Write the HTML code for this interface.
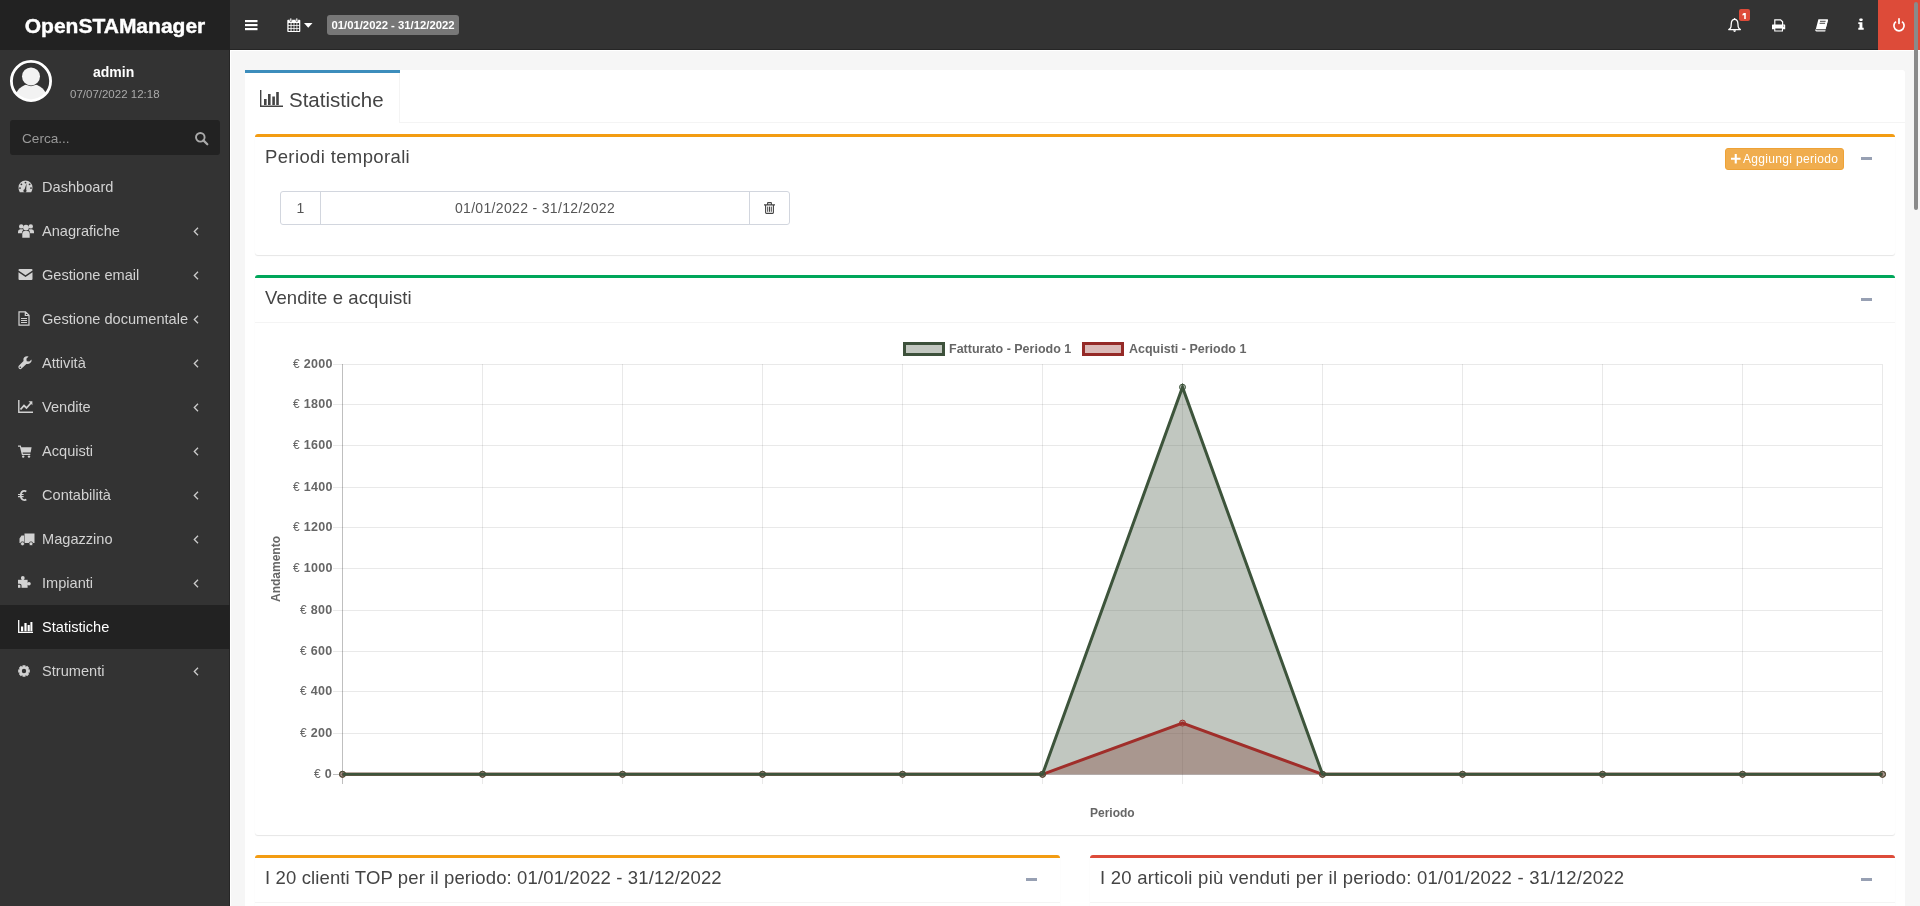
<!DOCTYPE html>
<html><head><meta charset="utf-8">
<style>
*{box-sizing:border-box;margin:0;padding:0}
html,body{width:1920px;height:906px;overflow:hidden;background:#f4f4f4;font-family:"Liberation Sans",sans-serif;color:#333}
.abs{position:absolute;will-change:transform}
svg{position:absolute;overflow:visible}
#logo{left:0;top:0;width:230px;height:50px;background:#222;color:#fff;font-weight:bold;font-size:21px;line-height:51px;text-align:center;-webkit-text-stroke:0.4px #fff}
#nav{left:230px;top:0;width:1690px;height:50px;background:#333;border-bottom:1px solid #262626}
#side{left:0;top:50px;width:230px;height:856px;background:#333;border-right:1px solid #262626}
.mi{position:absolute;left:0;width:230px;height:44px;color:#d2d2d2;font-size:14.6px;line-height:44px}
.mi span{position:absolute;left:42px;top:0;will-change:transform}
.mi.act{background:#222;color:#fff}
#content{left:230px;top:50px;width:1690px;height:856px;background:#f6f6f6;border-left:1px solid #fff;border-top:1px solid #fff}
.box{position:absolute;background:#fff;border-radius:3px;box-shadow:0 1px 1px rgba(0,0,0,0.1)}
.bt{position:absolute;left:10px;font-size:18.5px;color:#444;white-space:nowrap;will-change:transform}
.minus{position:absolute;width:11px;height:3px;background:#97a0b3}
.lbl{position:absolute;will-change:transform;font-size:12px;font-weight:bold;color:#666;white-space:nowrap}
.yl{position:absolute;will-change:transform;right:1587.7px;font-size:12.5px;font-weight:bold;color:#666;white-space:nowrap;line-height:14px;letter-spacing:0.3px}
.yl i{font-style:normal;font-weight:normal;font-size:12px}
</style></head><body>
<div id="logo" class="abs">OpenSTAManager</div>
<div id="nav" class="abs"></div>
<!-- hamburger -->
<svg style="left:245px;top:19px" width="13" height="12" viewBox="0 0 13 12"><rect x="0" y="1" width="12.5" height="2.2" fill="#fff"/><rect x="0" y="5" width="12.5" height="2.2" fill="#fff"/><rect x="0" y="9" width="12.5" height="2.2" fill="#fff"/></svg>
<!-- calendar -->
<svg style="left:287px;top:18px" width="14" height="15" viewBox="0 0 14 15"><path fill="#fff" fill-rule="evenodd" d="M0.3 2.6Q0.3 1.8 1.1 1.8H12.5Q13.3 1.8 13.3 2.6V13.3Q13.3 14.1 12.5 14.1H1.1Q0.3 14.1 0.3 13.3Z M1.6 5.1V7.3H3.6V5.1Z M4.5 5.1V7.3H6.6V5.1Z M7.4 5.1V7.3H9.5V5.1Z M10.3 5.1V7.3H12.1V5.1Z M1.6 8.1V10.2H3.6V8.1Z M4.5 8.1V10.2H6.6V8.1Z M7.4 8.1V10.2H9.5V8.1Z M10.3 8.1V10.2H12.1V8.1Z M1.6 11V13H3.6V11Z M4.5 11V13H6.6V11Z M7.4 11V13H9.5V11Z M10.3 11V13H12.1V11Z"/><rect x="2.9" y="0" width="1.8" height="3.6" rx="0.9" fill="#fff" stroke="#353535" stroke-width="0.6"/><rect x="8.9" y="0" width="1.8" height="3.6" rx="0.9" fill="#fff" stroke="#353535" stroke-width="0.6"/></svg>
<svg style="left:303.5px;top:23px" width="9" height="5" viewBox="0 0 9 5"><path d="M0 0H8.5L4.25 4.8Z" fill="#fff"/></svg>
<div class="abs" style="left:327px;top:15px;width:132px;height:20px;background:#777;border-radius:3px;color:#fff;font-weight:bold;font-size:11.3px;line-height:20px;text-align:center">01/01/2022 - 31/12/2022</div>
<!-- bell -->
<svg style="left:1728px;top:18px" width="14" height="15" viewBox="0 0 14 15"><path fill="none" stroke="#fff" stroke-width="1.3" stroke-linejoin="round" d="M6.6 1.3C4.6 1.3 3.4 3 3.3 5.5L3 8.8Q2.6 10.3 0.8 11.6H12.4Q10.6 10.3 10.2 8.8L9.9 5.5C9.8 3 8.6 1.3 6.6 1.3Z"/><path d="M5.2 12.2Q5.4 14 6.6 14Q7.8 14 8 12.2Z" fill="#fff"/><circle cx="6.6" cy="0.8" r="0.8" fill="#fff"/></svg>
<div class="abs" style="left:1739px;top:9px;width:11px;height:12px;background:#dd4b39;border-radius:2px"></div><svg style="left:1742px;top:13px" width="5" height="7" viewBox="0 0 5 7"><path fill="#fff" d="M1.9 0H3.8V6H2.2V1.9L0.5 2.4V1.1Z"/></svg>
<!-- print -->
<svg style="left:1772px;top:18.5px" width="14" height="13" viewBox="0 0 14 13"><path fill="none" stroke="#fff" stroke-width="1.2" d="M2.8 6V0.8H8.6L10.6 2.8V6"/><path fill="#fff" fill-rule="evenodd" d="M0 6.2Q0 5.6 0.6 5.6H12.6Q13.2 5.6 13.2 6.2V10.2H11V12.6H2.2V10.2H0Z M3.3 9.6V11.5H9.9V9.6Z"/><circle cx="11.6" cy="7" r="0.5" fill="#353535"/></svg>
<!-- book -->
<svg style="left:1815px;top:18.5px" width="14" height="13" viewBox="0 0 14 13"><path fill="#fff" d="M3.4 0.3H12.3Q13.3 0.3 13 1.4L10.6 10.2H1.6Q0.8 10.2 1 9.4Z M0.2 10.4Q0 12.4 1.6 12.4H10.2L10.6 11.2H1.8Q1 11.2 1.3 10.4Z"/><path d="M11.9 2.2L10 9.6" stroke="#fff" stroke-width="1.3"/><path d="M5 2.3H10.6M4.6 4.3H10.1" stroke="#353535" stroke-width="0.9"/></svg>
<!-- info -->
<svg style="left:1857.5px;top:18px" width="6" height="12" viewBox="0 0 6 12"><rect x="1.4" y="0.4" width="3.2" height="2.6" rx="0.8" fill="#fff"/><path fill="#fff" d="M0.3 4.2H4.4V9.8H5.7V11.8H0.3V9.8H1.5V6H0.3Z"/></svg>
<!-- power -->
<div class="abs" style="left:1878px;top:0;width:42px;height:50px;background:#dd4b39"></div>
<svg style="left:1893px;top:18px" width="12" height="13" viewBox="0 0 12 13"><path fill="none" stroke="#fff" stroke-width="1.7" d="M3 3.6A5.1 5.1 0 1 0 9 3.6"/><rect x="5.15" y="0" width="1.7" height="6.2" rx="0.85" fill="#fff"/></svg>

<div id="side" class="abs"></div>
<!-- user panel -->
<svg style="left:10px;top:60px" width="42" height="42" viewBox="0 0 42 42"><defs><clipPath id="avc"><circle cx="21" cy="21" r="19"/></clipPath></defs><g clip-path="url(#avc)"><ellipse cx="21" cy="38.5" rx="16" ry="14.5" fill="#f2f2f2"/><circle cx="21" cy="16.4" r="9.8" fill="#333"/><circle cx="21" cy="16.4" r="9" fill="#f2f2f2"/></g><circle cx="21" cy="21" r="19.6" fill="none" stroke="#fff" stroke-width="2.8"/></svg>
<div class="abs" style="left:93px;top:64px;font-size:14px;font-weight:bold;color:#fff;line-height:16px">admin</div>
<div class="abs" style="left:70px;top:88px;font-size:11.5px;color:#aaa;line-height:13px">07/07/2022 12:18</div>
<div class="abs" style="left:10px;top:120px;width:210px;height:35px;background:#222;border-radius:3px"></div>
<div class="abs" style="left:22px;top:130px;font-size:13.6px;color:#999;line-height:17px">Cerca...</div>
<svg style="left:195px;top:132px" width="14" height="13" viewBox="0 0 14 13"><circle cx="5.3" cy="5.3" r="4.3" fill="none" stroke="#aaa" stroke-width="1.9"/><path d="M8.4 8.4L12.3 12.3" stroke="#aaa" stroke-width="2.2" stroke-linecap="round"/></svg>
<!-- menu -->
<div class="mi" style="top:165px"><span>Dashboard</span></div>
<div class="mi" style="top:209px"><span>Anagrafiche</span></div>
<div class="mi" style="top:253px"><span>Gestione email</span></div>
<div class="mi" style="top:297px"><span>Gestione documentale</span></div>
<div class="mi" style="top:341px"><span>Attività</span></div>
<div class="mi" style="top:385px"><span>Vendite</span></div>
<div class="mi" style="top:429px"><span>Acquisti</span></div>
<div class="mi" style="top:473px"><span>Contabilità</span></div>
<div class="mi" style="top:517px"><span>Magazzino</span></div>
<div class="mi" style="top:561px"><span>Impianti</span></div>
<div class="mi act" style="top:605px"><span>Statistiche</span></div>
<div class="mi" style="top:649px"><span>Strumenti</span></div>
<!-- chevrons -->
<svg style="left:193px;top:227px" width="6" height="9" viewBox="0 0 6 9"><path d="M5 0.8L1.3 4.5L5 8.2" fill="none" stroke="#ccc" stroke-width="1.3"/></svg>
<svg style="left:193px;top:271px" width="6" height="9" viewBox="0 0 6 9"><path d="M5 0.8L1.3 4.5L5 8.2" fill="none" stroke="#ccc" stroke-width="1.3"/></svg>
<svg style="left:193px;top:315px" width="6" height="9" viewBox="0 0 6 9"><path d="M5 0.8L1.3 4.5L5 8.2" fill="none" stroke="#ccc" stroke-width="1.3"/></svg>
<svg style="left:193px;top:359px" width="6" height="9" viewBox="0 0 6 9"><path d="M5 0.8L1.3 4.5L5 8.2" fill="none" stroke="#ccc" stroke-width="1.3"/></svg>
<svg style="left:193px;top:403px" width="6" height="9" viewBox="0 0 6 9"><path d="M5 0.8L1.3 4.5L5 8.2" fill="none" stroke="#ccc" stroke-width="1.3"/></svg>
<svg style="left:193px;top:447px" width="6" height="9" viewBox="0 0 6 9"><path d="M5 0.8L1.3 4.5L5 8.2" fill="none" stroke="#ccc" stroke-width="1.3"/></svg>
<svg style="left:193px;top:491px" width="6" height="9" viewBox="0 0 6 9"><path d="M5 0.8L1.3 4.5L5 8.2" fill="none" stroke="#ccc" stroke-width="1.3"/></svg>
<svg style="left:193px;top:535px" width="6" height="9" viewBox="0 0 6 9"><path d="M5 0.8L1.3 4.5L5 8.2" fill="none" stroke="#ccc" stroke-width="1.3"/></svg>
<svg style="left:193px;top:579px" width="6" height="9" viewBox="0 0 6 9"><path d="M5 0.8L1.3 4.5L5 8.2" fill="none" stroke="#ccc" stroke-width="1.3"/></svg>
<svg style="left:193px;top:667px" width="6" height="9" viewBox="0 0 6 9"><path d="M5 0.8L1.3 4.5L5 8.2" fill="none" stroke="#ccc" stroke-width="1.3"/></svg>
<!-- menu icons -->
<svg style="left:18px;top:180px" width="15" height="13" viewBox="0 0 15 13"><path fill="#d2d2d2" fill-rule="evenodd" d="M7.5 0.5A7 7 0 0 0 0.5 7.5Q0.5 10 1.8 12.2H13.2Q14.5 10 14.5 7.5A7 7 0 0 0 7.5 0.5Z M7.5 1.7A0.9 0.9 0 1 0 7.5 3.5A0.9 0.9 0 1 0 7.5 1.7Z M3.4 3.4A0.9 0.9 0 1 0 3.4 5.2A0.9 0.9 0 1 0 3.4 3.4Z M11.6 3.4A0.9 0.9 0 1 0 11.6 5.2A0.9 0.9 0 1 0 11.6 3.4Z M2 7.2A0.9 0.9 0 1 0 2 9A0.9 0.9 0 1 0 2 7.2Z M13 7.2A0.9 0.9 0 1 0 13 9A0.9 0.9 0 1 0 13 7.2Z M8.6 3.2L6.6 9.2A1.6 1.6 0 1 0 8.2 9.7Z"/></svg>
<svg style="left:17.5px;top:223.5px" width="16" height="14" viewBox="0 0 16 14"><g fill="#d2d2d2"><circle cx="3.2" cy="2.4" r="2.2"/><circle cx="12.8" cy="2.4" r="2.2"/><circle cx="8" cy="3.6" r="2.9"/><path d="M0 7.8Q0 5.3 2.2 5.3H4.4Q5 5.3 5.4 5.8Q4 6.9 3.8 9.2H0Z"/><path d="M16 7.8Q16 5.3 13.8 5.3H11.6Q11 5.3 10.6 5.8Q12 6.9 12.2 9.2H16Z"/><path d="M4.3 13.8V10.2Q4.3 7.1 6.7 7.1H9.3Q11.7 7.1 11.7 10.2V13.8Z"/></g></svg>
<svg style="left:18px;top:269px" width="15" height="11" viewBox="0 0 15 11"><g fill="#d2d2d2"><path d="M0.5 1Q0.5 0 1.5 0H13.5Q14.5 0 14.5 1V1.6L7.5 6.2L0.5 1.6Z"/><path d="M0.5 3.3L7.5 7.9L14.5 3.3V10Q14.5 11 13.5 11H1.5Q0.5 11 0.5 10Z"/></g></svg>
<svg style="left:18px;top:311px" width="12" height="15" viewBox="0 0 12 15"><path fill="none" stroke="#d2d2d2" stroke-width="1.2" d="M1 0.8H7.5L11 4.3V14.2H1Z M7.3 0.8V4.5H11"/><g fill="#d2d2d2"><rect x="3" y="7" width="6" height="1"/><rect x="3" y="9" width="6" height="1"/><rect x="3" y="11" width="6" height="1"/></g></svg>
<svg style="left:18px;top:356px" width="14" height="14" viewBox="0 0 14 14"><path fill="#d2d2d2" d="M13.6 3.4L11.3 5.5L8.7 5.2L8.4 2.7L10.6 0.4Q8 -0.4 6.3 1.3Q4.9 2.7 5.5 4.9L0.8 9.8Q-0.3 11 0.9 12.6Q2.3 13.8 3.6 12.6L8.4 7.9Q10.6 8.6 12.2 7.1Q14 5.4 13.6 3.4Z"/><circle cx="2.3" cy="11.3" r="0.8" fill="#353535"/></svg>
<svg style="left:18px;top:400px" width="15" height="13" viewBox="0 0 15 13"><path fill="none" stroke="#d2d2d2" stroke-width="1.4" d="M0.8 0V12.2H15"/><path fill="none" stroke="#d2d2d2" stroke-width="1.8" d="M2.5 9.5L6 5.5L8.5 8L13 3"/><path fill="#d2d2d2" d="M10.5 1.3H14.4V5.2Z"/></svg>
<svg style="left:18px;top:445px" width="14" height="13" viewBox="0 0 14 13"><path fill="#d2d2d2" d="M0 0.5H2.8L3.3 2.3H13.6L12.6 7.6H4.6L4.9 8.8H12.3V10H3.9L1.9 1.7H0Z"/><circle cx="5.2" cy="11.6" r="1.2" fill="#d2d2d2"/><circle cx="11" cy="11.6" r="1.2" fill="#d2d2d2"/></svg>
<svg style="left:18px;top:489.5px" width="9" height="11" viewBox="0 0 9 11"><path fill="none" stroke="#d2d2d2" stroke-width="1.8" d="M8.3 1.4Q7.5 0.9 6.5 0.9Q3 0.9 2.7 5.5Q3 10.1 6.5 10.1Q7.5 10.1 8.3 9.6"/><path fill="#d2d2d2" d="M0 3.9H5.6V5.1H0Z M0 6H5.6V7.2H0Z"/></svg>
<svg style="left:18.5px;top:533px" width="16" height="13" viewBox="0 0 16 13"><path fill="#d2d2d2" d="M5.5 0.5H15.5V10H5.5Z M0.5 5.5L2.5 2.5H5V10H0.5Z"/><circle cx="3.5" cy="10.8" r="2" fill="#d2d2d2" stroke="#353535" stroke-width="0.8"/><circle cx="12" cy="10.8" r="2" fill="#d2d2d2" stroke="#353535" stroke-width="0.8"/></svg>
<svg style="left:18px;top:576px" width="13" height="12" viewBox="0 0 13 12"><g fill="#d2d2d2"><rect x="0" y="3.8" width="9.6" height="8"/><circle cx="4.8" cy="2" r="1.9"/><rect x="3.9" y="2" width="1.8" height="2.5"/><circle cx="11" cy="7.8" r="1.8"/><rect x="9" y="6.9" width="2.2" height="1.8"/></g><path d="M0 8.2H1.6Q3 8.2 3 9.8V12" stroke="#353535" stroke-width="1.1" fill="none"/></svg>
<svg style="left:18px;top:620px" width="15" height="13" viewBox="0 0 15 13"><path fill="none" stroke="#fff" stroke-width="1.3" d="M0.7 0V12.3H15"/><g fill="#fff"><rect x="3" y="6.5" width="2.2" height="4.8"/><rect x="6.4" y="3" width="2.2" height="8.3"/><rect x="9.6" y="5" width="2.2" height="6.3"/><rect x="12.4" y="2" width="2" height="9.3"/></g></svg>
<svg style="left:18px;top:665px" width="12" height="12" viewBox="0 0 12 12"><path fill="#d2d2d2" fill-rule="evenodd" d="M10.29 4.35 L11.83 4.57 L11.83 7.43 L10.29 7.65 L10.21 7.86 L11.13 9.11 L9.11 11.13 L7.86 10.21 L7.65 10.29 L7.43 11.83 L4.57 11.83 L4.35 10.29 L4.14 10.21 L2.89 11.13 L0.87 9.11 L1.79 7.86 L1.71 7.65 L0.17 7.43 L0.17 4.57 L1.71 4.35 L1.79 4.14 L0.87 2.89 L2.89 0.87 L4.14 1.79 L4.35 1.71 L4.57 0.17 L7.43 0.17 L7.65 1.71 L7.86 1.79 L9.11 0.87 L11.13 2.89 L10.21 4.14Z M6 3.8A2.2 2.2 0 1 0 6 8.2A2.2 2.2 0 1 0 6 3.8Z"/></svg>
<div id="content" class="abs"></div>
<!-- tab card -->
<div class="abs" style="left:245px;top:70px;width:1660px;height:836px;background:#fff;border-radius:3px 3px 0 0"></div>
<div class="abs" style="left:400px;top:122px;width:1505px;height:1px;background:#f4f4f4"></div>
<div class="abs" style="left:245px;top:70px;width:155px;height:3px;background:#3c8dbc"></div>
<div class="abs" style="left:399px;top:73px;width:1px;height:50px;background:#f4f4f4"></div>
<svg style="left:260px;top:90px" width="24" height="17" viewBox="0 0 24 17"><path fill="none" stroke="#444" stroke-width="1.4" d="M0.7 0V16.3H23"/><g fill="#444"><rect x="4" y="9" width="2.6" height="6"/><rect x="8" y="4" width="2.6" height="11"/><rect x="12.3" y="6.5" width="2.6" height="8.5"/><rect x="16.2" y="2" width="2.6" height="13"/></g></svg>
<div class="abs" style="left:288.5px;top:87.5px;font-size:20.5px;color:#444;line-height:24px">Statistiche</div>

<!-- box 1 periodi -->
<div class="box" style="left:255px;top:134px;width:1640px;height:121px;border-top:3px solid #f39c12"></div>
<div class="bt" style="top:146px;line-height:22px;left:265px;letter-spacing:0.37px">Periodi temporali</div>
<div class="abs" style="left:1725px;top:148px;width:119px;height:22px;background:#f0ad4e;border:1px solid #eea236;border-radius:3px;color:#fff;font-size:12px;line-height:20px;padding-left:17px;letter-spacing:0.33px">Aggiungi periodo</div>
<svg style="left:1731px;top:154px" width="9.5" height="9.5" viewBox="0 0 9.5 9.5"><path d="M3.7 0H5.8V3.7H9.5V5.8H5.8V9.5H3.7V5.8H0V3.7H3.7Z" fill="#fff"/></svg>
<div class="minus" style="left:1861px;top:157px"></div>
<div class="abs" style="left:280px;top:191px;width:510px;height:34px;border:1px solid #d2d6de;border-radius:3px"></div>
<div class="abs" style="left:320px;top:191px;width:1px;height:34px;background:#d2d6de"></div>
<div class="abs" style="left:749px;top:191px;width:1px;height:34px;background:#d2d6de"></div>
<div class="abs" style="left:281px;top:200px;width:39px;font-size:14px;line-height:17px;color:#555;text-align:center">1</div>
<div class="abs" style="left:321px;top:200px;width:428px;font-size:14px;line-height:17px;color:#555;text-align:center;letter-spacing:0.33px">01/01/2022 - 31/12/2022</div>
<svg style="left:764px;top:202px" width="11" height="12" viewBox="0 0 11 12"><path fill="none" stroke="#444" stroke-width="1.1" d="M3.6 2.6V1.1Q3.6 0.6 4.1 0.6H6.9Q7.4 0.6 7.4 1.1V2.6 M0 2.9H11 M1.6 2.9V10.6Q1.6 11.4 2.4 11.4H8.6Q9.4 11.4 9.4 10.6V2.9"/><path fill="none" stroke="#444" stroke-width="1" d="M3.7 4.6V9.8M5.5 4.6V9.8M7.3 4.6V9.8"/></svg>

<!-- box 2 vendite -->
<div class="box" style="left:255px;top:275px;width:1640px;height:560px;border-top:3px solid #00a65a"></div>
<div class="abs" style="left:255px;top:322px;width:1640px;height:1px;background:#f4f4f4"></div>
<div class="bt" style="top:287px;line-height:22px;left:265px;letter-spacing:0.1px">Vendite e acquisti</div>
<div class="minus" style="left:1861px;top:298px"></div>

<!-- box 3 clienti -->
<div class="box" style="left:255px;top:855px;width:805px;height:60px;border-top:3px solid #f39c12"></div>
<div class="abs" style="left:255px;top:902px;width:805px;height:1px;background:#f4f4f4"></div>
<div class="bt" style="top:867px;line-height:22px;left:265px;letter-spacing:0.13px">I 20 clienti TOP per il periodo: 01/01/2022 - 31/12/2022</div>
<div class="minus" style="left:1026px;top:878px"></div>

<!-- box 4 articoli -->
<div class="box" style="left:1090px;top:855px;width:805px;height:60px;border-top:3px solid #dd4b39"></div>
<div class="abs" style="left:1090px;top:902px;width:805px;height:1px;background:#f4f4f4"></div>
<div class="bt" style="top:867px;line-height:22px;left:1100px;letter-spacing:0.25px">I 20 articoli più venduti per il periodo: 01/01/2022 - 31/12/2022</div>
<div class="minus" style="left:1861px;top:878px"></div>

<!-- chart -->
<svg id="chart" style="left:0;top:0" width="1920" height="906" viewBox="0 0 1920 906"><path d="M333 733.5H1882M333 691.5H1882M333 651.5H1882M333 610.5H1882M333 568.5H1882M333 527.5H1882M333 487.5H1882M333 445.5H1882M333 404.5H1882M333 364.5H1882M482.5 364V784M622.5 364V784M762.5 364V784M902.5 364V784M1042.5 364V784M1182.5 364V784M1322.5 364V784M1462.5 364V784M1602.5 364V784M1742.5 364V784M1882.5 364V784" stroke="rgba(0,0,0,0.085)" stroke-width="1" fill="none"/><path d="M333 774.5H1882M342.5 364V784" stroke="rgba(0,0,0,0.25)" stroke-width="1" fill="none"/><polygon points="342.5,774.3 482.5,774.3 622.5,774.3 762.5,774.3 902.5,774.3 1042.5,774.3 1182.5,723.1 1322.5,774.3 1462.5,774.3 1602.5,774.3 1742.5,774.3 1882.5,774.3 1882.5,774.3 342.5,774.3" fill="rgba(149,42,39,0.33)"/><polygon points="342.5,774.3 482.5,774.3 622.5,774.3 762.5,774.3 902.5,774.3 1042.5,774.3 1182.5,387.2 1322.5,774.3 1462.5,774.3 1602.5,774.3 1742.5,774.3 1882.5,774.3 1882.5,774.3 342.5,774.3" fill="rgba(61,81,59,0.32)"/><polyline points="342.5,774.3 482.5,774.3 622.5,774.3 762.5,774.3 902.5,774.3 1042.5,774.3 1182.5,723.1 1322.5,774.3 1462.5,774.3 1602.5,774.3 1742.5,774.3 1882.5,774.3" fill="none" stroke="#a02e2a" stroke-width="3" stroke-linejoin="miter"/><circle cx="342.5" cy="774.3" r="3" fill="rgba(149,42,39,0.33)" stroke="#a02e2a" stroke-width="1"/><circle cx="482.5" cy="774.3" r="3" fill="rgba(149,42,39,0.33)" stroke="#a02e2a" stroke-width="1"/><circle cx="622.5" cy="774.3" r="3" fill="rgba(149,42,39,0.33)" stroke="#a02e2a" stroke-width="1"/><circle cx="762.5" cy="774.3" r="3" fill="rgba(149,42,39,0.33)" stroke="#a02e2a" stroke-width="1"/><circle cx="902.5" cy="774.3" r="3" fill="rgba(149,42,39,0.33)" stroke="#a02e2a" stroke-width="1"/><circle cx="1042.5" cy="774.3" r="3" fill="rgba(149,42,39,0.33)" stroke="#a02e2a" stroke-width="1"/><circle cx="1182.5" cy="723.1" r="3" fill="rgba(149,42,39,0.33)" stroke="#a02e2a" stroke-width="1"/><circle cx="1322.5" cy="774.3" r="3" fill="rgba(149,42,39,0.33)" stroke="#a02e2a" stroke-width="1"/><circle cx="1462.5" cy="774.3" r="3" fill="rgba(149,42,39,0.33)" stroke="#a02e2a" stroke-width="1"/><circle cx="1602.5" cy="774.3" r="3" fill="rgba(149,42,39,0.33)" stroke="#a02e2a" stroke-width="1"/><circle cx="1742.5" cy="774.3" r="3" fill="rgba(149,42,39,0.33)" stroke="#a02e2a" stroke-width="1"/><circle cx="1882.5" cy="774.3" r="3" fill="rgba(149,42,39,0.33)" stroke="#a02e2a" stroke-width="1"/><polyline points="342.5,774.3 482.5,774.3 622.5,774.3 762.5,774.3 902.5,774.3 1042.5,774.3 1182.5,387.2 1322.5,774.3 1462.5,774.3 1602.5,774.3 1742.5,774.3 1882.5,774.3" fill="none" stroke="#3d543b" stroke-width="3" stroke-linejoin="miter"/><circle cx="342.5" cy="774.3" r="3" fill="rgba(61,81,59,0.32)" stroke="#3d543b" stroke-width="1"/><circle cx="482.5" cy="774.3" r="3" fill="rgba(61,81,59,0.32)" stroke="#3d543b" stroke-width="1"/><circle cx="622.5" cy="774.3" r="3" fill="rgba(61,81,59,0.32)" stroke="#3d543b" stroke-width="1"/><circle cx="762.5" cy="774.3" r="3" fill="rgba(61,81,59,0.32)" stroke="#3d543b" stroke-width="1"/><circle cx="902.5" cy="774.3" r="3" fill="rgba(61,81,59,0.32)" stroke="#3d543b" stroke-width="1"/><circle cx="1042.5" cy="774.3" r="3" fill="rgba(61,81,59,0.32)" stroke="#3d543b" stroke-width="1"/><circle cx="1182.5" cy="387.2" r="3" fill="rgba(61,81,59,0.32)" stroke="#3d543b" stroke-width="1"/><circle cx="1322.5" cy="774.3" r="3" fill="rgba(61,81,59,0.32)" stroke="#3d543b" stroke-width="1"/><circle cx="1462.5" cy="774.3" r="3" fill="rgba(61,81,59,0.32)" stroke="#3d543b" stroke-width="1"/><circle cx="1602.5" cy="774.3" r="3" fill="rgba(61,81,59,0.32)" stroke="#3d543b" stroke-width="1"/><circle cx="1742.5" cy="774.3" r="3" fill="rgba(61,81,59,0.32)" stroke="#3d543b" stroke-width="1"/><circle cx="1882.5" cy="774.3" r="3" fill="rgba(61,81,59,0.32)" stroke="#3d543b" stroke-width="1"/></svg>
<div class="abs" style="left:902.5px;top:341.5px;width:41.5px;height:13.5px;border:3px solid #3d513b;background:#c2c7c0"></div>
<div class="abs" style="left:1082px;top:341.5px;width:41.5px;height:13.5px;border:3px solid #952a27;background:#dbbab8"></div>
<div class="lbl" style="left:949px;top:341.5px;font-size:12.5px;line-height:15px">Fatturato - Periodo 1</div>
<div class="lbl" style="left:1129px;top:341.5px;font-size:12.5px;line-height:15px">Acquisti - Periodo 1</div>
<div class="lbl" style="left:1090px;top:806px;line-height:14px">Periodo</div>
<div class="lbl" style="left:243px;top:562px;width:66px;line-height:14px;transform:rotate(-90deg);transform-origin:33px 7px;text-align:center">Andamento</div>
<div class="yl" style="top:357px"><i>€</i> 2000</div>
<div class="yl" style="top:397px"><i>€</i> 1800</div>
<div class="yl" style="top:438px"><i>€</i> 1600</div>
<div class="yl" style="top:480px"><i>€</i> 1400</div>
<div class="yl" style="top:520px"><i>€</i> 1200</div>
<div class="yl" style="top:561px"><i>€</i> 1000</div>
<div class="yl" style="top:603px"><i>€</i> 800</div>
<div class="yl" style="top:644px"><i>€</i> 600</div>
<div class="yl" style="top:684px"><i>€</i> 400</div>
<div class="yl" style="top:726px"><i>€</i> 200</div>
<div class="yl" style="top:767px"><i>€</i> 0</div>
<!-- scrollbar -->
<div class="abs" style="left:1914px;top:2px;width:4px;height:208px;background:#8a8a8a;border-radius:2px"></div>
</body></html>
